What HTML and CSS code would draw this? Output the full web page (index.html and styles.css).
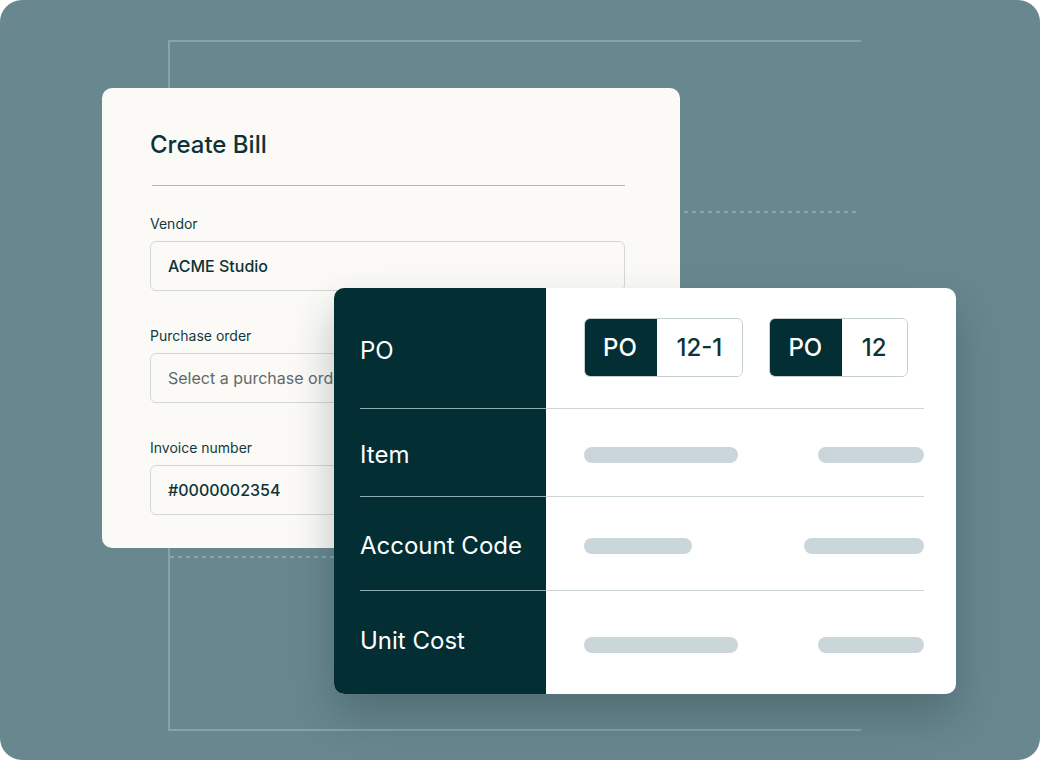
FILE: index.html
```html
<!DOCTYPE html>
<html lang="en">
<head>
<meta charset="utf-8">
<title>Create Bill</title>
<link rel="stylesheet" href="styles.css">
</head>
<body>
<div class="canvas">
  <div class="line line-left"></div>
  <div class="line line-top"></div>
  <div class="line line-bottom"></div>
  <div class="dash dash-upper"></div>
  <div class="dash dash-lower"></div>

  <section class="bill-card">
    <h1 class="bill-title">Create Bill</h1>
    <div class="bill-divider"></div>
    <div class="field field-first">
      <label class="field-label">Vendor</label>
      <div class="field-input filled">ACME Studio</div>
    </div>
    <div class="field">
      <label class="field-label">Purchase order</label>
      <div class="field-input placeholder">Select a purchase order</div>
    </div>
    <div class="field">
      <label class="field-label">Invoice number</label>
      <div class="field-input filled">#0000002354</div>
    </div>
  </section>

  <section class="table-card">
    <div class="trow row-po">
      <div class="tlabel"><div class="tlabel-inner">PO</div></div>
      <div class="tvals"><div class="tvals-inner badges">
        <div class="badge"><span class="badge-key">PO</span><span class="badge-val">12-1</span></div>
        <div class="badge"><span class="badge-key">PO</span><span class="badge-val">12</span></div>
      </div></div>
    </div>
    <div class="trow row-item">
      <div class="tlabel"><div class="tlabel-inner">Item</div></div>
      <div class="tvals"><div class="tvals-inner">
        <span class="bar bar-154"></span><span class="bar bar-106"></span>
      </div></div>
    </div>
    <div class="trow row-account">
      <div class="tlabel"><div class="tlabel-inner">Account Code</div></div>
      <div class="tvals"><div class="tvals-inner">
        <span class="bar bar-108"></span><span class="bar bar-120"></span>
      </div></div>
    </div>
    <div class="trow row-unit last">
      <div class="tlabel"><div class="tlabel-inner">Unit Cost</div></div>
      <div class="tvals"><div class="tvals-inner unit-vals">
        <span class="bar bar-154"></span><span class="bar bar-106"></span>
      </div></div>
    </div>
  </section>
</div>
</body>
</html>
```
FILE: styles.css
```css
* { box-sizing: border-box; }
html, body { margin: 0; padding: 0; background: #ffffff; }
body { font-family: Inter, "Noto Sans", "Liberation Sans", sans-serif; }

.canvas {
  position: relative;
  width: 1040px;
  height: 760px;
  background: #68878f;
  border-radius: 22px;
  overflow: hidden;
}

.line { position: absolute; background: #86a3aa; }
.line-left { left: 168px; top: 40px; width: 1.5px; height: 690px; }
.line-top { left: 168px; top: 40px; width: 693px; height: 1.5px; }
.line-bottom { left: 168px; top: 729px; width: 693px; height: 1.5px; }

.dash {
  position: absolute;
  height: 2px;
  background: repeating-linear-gradient(90deg, #88a6ac 0 4px, transparent 4px 8px);
}
.dash-upper { left: 684px; top: 211px; width: 176px; }
.dash-lower { left: 170px; top: 556px; width: 164px; }

.bill-card {
  position: absolute;
  left: 102px;
  top: 88px;
  width: 578px;
  height: 460px;
  background: #fbfaf7;
  border-radius: 10px;
  padding: 41px 55px 0 48px;
}
.bill-title {
  margin: 0;
  font-size: 24px;
  line-height: 32px;
  font-weight: 500;
  color: #0d3338;
  letter-spacing: 0;
}
.bill-divider {
  margin: 24px 0 0 2px;
  height: 1px;
  background: #b3b8b6;
}
.field { display: flex; flex-direction: column; gap: 7px; margin-top: 35px; }
.field-first { margin-top: 28px; }
.field-label {
  font-size: 14px;
  line-height: 20px;
  color: #123a3e;
}
.field-input {
  height: 50px;
  border: 1px solid #d3d9d8;
  border-radius: 6px;
  padding: 0 17px;
  display: flex;
  align-items: center;
  font-size: 16px;
  white-space: nowrap;
  overflow: hidden;
}
.filled { color: #0d3338; font-weight: 500; }
.placeholder { color: #5e6a6b; }

.table-card {
  position: absolute;
  left: 334px;
  top: 288px;
  width: 622px;
  height: 406px;
  border-radius: 10px;
  overflow: hidden;
  background: #ffffff;
  box-shadow: 0 22px 44px rgba(24, 45, 52, 0.28);
  display: flex;
  flex-direction: column;
}
.trow { display: grid; grid-template-columns: 212px 1fr; }
.row-po { height: 121px; }
.row-item { height: 88px; }
.row-account { height: 94px; }
.row-unit { height: 103px; }

.tlabel { background: #032e33; padding-left: 26px; }
.tlabel-inner {
  height: 100%;
  display: flex;
  align-items: center;
  border-bottom: 1px solid #8fb0b3;
  color: #ffffff;
  font-size: 24px;
  padding-top: 4px;
}
.row-unit .tlabel-inner { padding-top: 0; padding-bottom: 4px; }
.tvals { padding-right: 32px; }
.tvals-inner {
  height: 100%;
  display: flex;
  align-items: center;
  justify-content: space-between;
  padding-left: 38px;
  padding-top: 5px;
  border-bottom: 1px solid #cdd6d8;
}
.last .tlabel-inner, .last .tvals-inner { border-bottom: none; }
.unit-vals { padding-top: 4px; }

.badges { justify-content: flex-start; gap: 26px; padding-top: 0; padding-bottom: 2px; }
.badge {
  display: flex;
  height: 59px;
  border: 1.5px solid #c3cfd1;
  border-radius: 6px;
  overflow: hidden;
  font-size: 24px;
  font-weight: 500;
}
.badge-key {
  width: 73px;
  margin: -1.5px 0 -1.5px -1.5px;
  background: #032e33;
  color: #ffffff;
  display: flex;
  align-items: center;
  justify-content: center;
}
.badge-val {
  padding: 0 20px;
  color: #0d3338;
  display: flex;
  align-items: center;
  justify-content: center;
  background: #ffffff;
}

.bar { display: block; height: 16px; border-radius: 8px; background: #cbd6da; }
.bar-154 { width: 154px; }
.bar-106 { width: 106px; }
.bar-108 { width: 108px; }
.bar-120 { width: 120px; }
```
